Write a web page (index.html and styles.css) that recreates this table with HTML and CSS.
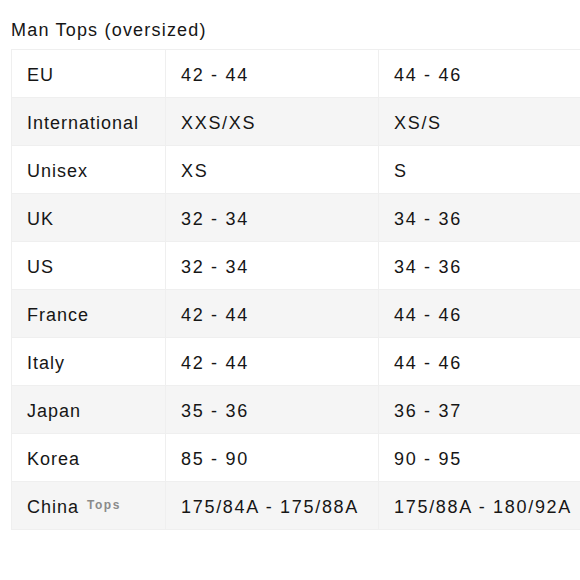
FILE: index.html
```html
<!DOCTYPE html>
<html lang="en">
<head>
<meta charset="utf-8">
<title>Man Tops (oversized)</title>
<link rel="stylesheet" href="styles.css">
</head>
<body>
<div class="page">
  <h2 class="title">Man Tops (oversized)</h2>
  <div class="table-wrap">
    <table class="sizes">
      <colgroup>
        <col class="c1"><col class="c2"><col class="c3">
      </colgroup>
      <tbody>
        <tr><td>EU</td><td>42 - 44</td><td>44 - 46</td></tr>
        <tr><td>International</td><td>XXS/XS</td><td>XS/S</td></tr>
        <tr><td>Unisex</td><td>XS</td><td>S</td></tr>
        <tr><td>UK</td><td>32 - 34</td><td>34 - 36</td></tr>
        <tr><td>US</td><td>32 - 34</td><td>34 - 36</td></tr>
        <tr><td>France</td><td>42 - 44</td><td>44 - 46</td></tr>
        <tr><td>Italy</td><td>42 - 44</td><td>44 - 46</td></tr>
        <tr><td>Japan</td><td>35 - 36</td><td>36 - 37</td></tr>
        <tr><td>Korea</td><td>85 - 90</td><td>90 - 95</td></tr>
        <tr><td>China <sup class="note">Tops</sup></td><td>175/84A - 175/88A</td><td>175/88A - 180/92A</td></tr>
      </tbody>
    </table>
  </div>
</div>
</body>
</html>
```
FILE: styles.css
```css
html, body {
  margin: 0;
  padding: 0;
  background: #fff;
}
body {
  font-family: "Liberation Sans", Arial, sans-serif;
  color: #161616;
  overflow: hidden;
}
.page {
  padding: 18px 0 0 11px;
}
.title {
  margin: 0;
  font-size: 18px;
  font-weight: normal;
  letter-spacing: 1.2px;
  line-height: 24px;
  height: 31px;
}
.table-wrap {
  width: 569px;
  overflow: hidden;
}
.sizes {
  border-collapse: collapse;
  table-layout: fixed;
  width: 580px;
  font-size: 18px;
  letter-spacing: 1px;
}
.c1 { width: 154px; }
.c2 { width: 213px; }
.c3 { width: 213px; }
.sizes td {
  height: 48px;
  padding: 4px 0 0 15px;
  border: 1px solid #efefef;
  vertical-align: middle;
  white-space: nowrap;
  box-sizing: border-box;
}
.sizes td + td {
  letter-spacing: 1.7px;
}
.sizes tr:nth-child(even) td {
  background: #f5f5f5;
}
.note {
  font-size: 12px;
  font-weight: bold;
  color: #8a8a8a;
  letter-spacing: 1.5px;
  margin-left: 2px;
  vertical-align: 4px;
  line-height: 0;
}
```
